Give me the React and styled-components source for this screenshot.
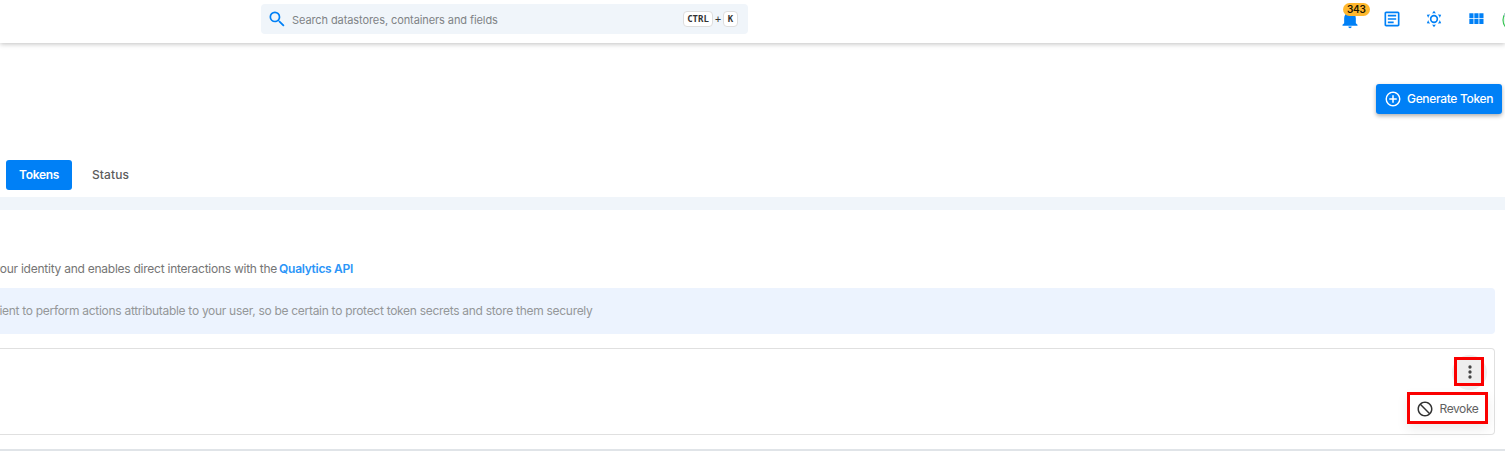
import React from "react";
import styled, { createGlobalStyle } from "styled-components";

const Global = createGlobalStyle`
  * { box-sizing: border-box; }
  body { margin: 0; background: #fff; font-family: Inter, "Liberation Sans", sans-serif; font-size: 12px; overflow: hidden; }
`;

const paths = {
  search: "M9.5,3A6.5,6.5 0 0,1 16,9.5C16,11.11 15.41,12.59 14.44,13.73L14.71,14H15.5L21,19.5L19.5,21L14,15.5V14.71L13.73,14.44C12.59,15.41 11.11,16 9.5,16A6.5,6.5 0 0,1 3,9.5A6.5,6.5 0 0,1 9.5,3M9.5,5C7,5 5,7 5,9.5C5,12 7,14 9.5,14C12,14 14,12 14,9.5C14,7 12,5 9.5,5Z",
  bell: "M21,19V20H3V19L5,17V11C5,7.9 7.03,5.17 10,4.29C10,4.19 10,4.1 10,4A2,2 0 0,1 12,2A2,2 0 0,1 14,4C14,4.1 14,4.19 14,4.29C16.97,5.17 19,7.9 19,11V17L21,19M14,21A2,2 0 0,1 12,23A2,2 0 0,1 10,21",
  notes: "M5,3C3.89,3 3,3.89 3,5V19C3,20.11 3.89,21 5,21H19C20.11,21 21,20.11 21,19V5C21,3.89 20.11,3 19,3H5M5,5H19V19H5V5M7,7V9H17V7H7M7,11V13H17V11H7M7,15V17H14V15H7Z",
  sun: "M12,7A5,5 0 0,1 17,12A5,5 0 0,1 12,17A5,5 0 0,1 7,12A5,5 0 0,1 12,7M12,9A3,3 0 0,0 9,12A3,3 0 0,0 12,15A3,3 0 0,0 15,12A3,3 0 0,0 12,9M12,2L14.39,5.42C13.65,5.15 12.84,5 12,5C11.16,5 10.35,5.15 9.61,5.42L12,2M3.34,7L7.5,6.65C6.9,7.16 6.36,7.78 5.94,8.5C5.5,9.24 5.25,10 5.11,10.79L3.34,7M3.36,17L5.12,13.23C5.26,14 5.53,14.78 5.95,15.5C6.37,16.24 6.91,16.86 7.5,17.37L3.36,17M20.65,7L18.88,10.79C18.74,10 18.47,9.23 18.05,8.5C17.63,7.78 17.1,7.15 16.5,6.64L20.65,7M20.64,17L16.5,17.36C17.09,16.85 17.62,16.22 18.04,15.5C18.46,14.77 18.73,14 18.87,13.21L20.64,17M12,22L9.59,18.56C10.33,18.83 11.14,19 12,19C12.82,19 13.63,18.83 14.37,18.56L12,22Z",
  grid: "M16,5V11H21V5M10,11H15V5H10M16,18H21V12H16M10,18H15V12H10M4,18H9V12H4M4,11H9V5H4V11Z",
  plus: "M12,20C7.59,20 4,16.41 4,12C4,7.59 7.59,4 12,4C16.41,4 20,7.59 20,12C20,16.41 16.41,20 12,20M12,2A10,10 0 0,0 2,12A10,10 0 0,0 12,22A10,10 0 0,0 22,12A10,10 0 0,0 12,2M13,7H11V11H7V13H11V17H13V13H17V11H13V7Z",
  dots: "M12,16A2,2 0 0,1 14,18A2,2 0 0,1 12,20A2,2 0 0,1 10,18A2,2 0 0,1 12,16M12,10A2,2 0 0,1 14,12A2,2 0 0,1 12,14A2,2 0 0,1 10,12A2,2 0 0,1 12,10M12,4A2,2 0 0,1 14,6A2,2 0 0,1 12,8A2,2 0 0,1 10,6A2,2 0 0,1 12,4Z",
  cancel: "M12 2C17.5 2 22 6.5 22 12S17.5 22 12 22 2 17.5 2 12 6.5 2 12 2M12 4C10.1 4 8.4 4.6 7.1 5.7L18.3 16.9C19.3 15.5 20 13.8 20 12C20 7.6 16.4 4 12 4M16.9 18.3L5.7 7.1C4.6 8.4 4 10.1 4 12C4 16.4 7.6 20 12 20C13.9 20 15.6 19.4 16.9 18.3Z",
};

const Svg = styled.svg`
  display: block;
  flex: none;
  fill: currentColor;
`;
const Icon = ({ name, size = 20 }) => (
  <Svg width={size} height={size} viewBox="0 0 24 24"><path d={paths[name]} /></Svg>
);

const Page = styled.div`
  position: relative;
  height: 451px;
  overflow: hidden;
  display: flex;
  flex-direction: column;
`;
const Label = styled.span`
  white-space: nowrap;
  letter-spacing: ${(p) => p.$track || 0}px;
`;

const TopBar = styled.header`
  position: relative;
  flex: none;
  height: 43px;
  padding: 4px 0 0 261px;
  display: flex;
  align-items: flex-start;
  box-shadow: 0 1px 5px rgba(0, 0, 0, 0.25);
`;
const SearchBox = styled.div`
  width: 487px;
  height: 30px;
  padding: 0 10px 0 6px;
  border-radius: 4px;
  background: #f0f5fa;
  color: #0080f6;
  display: flex;
  align-items: center;
`;
const SearchIcon = styled.div`
  margin-top: -1px;
`;
const Placeholder = styled(Label)`
  flex: 1;
  margin: 2px 0 0 5px;
  font-size: 11px;
  color: #7f8386;
`;
const Keys = styled.div`
  display: flex;
  align-items: center;
  gap: 2px;
  color: #333;
  font: 10px "DejaVu Sans Mono", monospace;
`;
const Key = styled.kbd`
  height: 16px;
  width: ${(p) => p.$w}px;
  border: 1px solid #dedede;
  border-radius: 4px;
  background: #fff;
  font: 700 9px/14px "DejaVu Sans Mono", monospace;
  text-align: center;
`;
const Actions = styled.div`
  margin-left: auto;
  margin-right: 19px;
  padding-top: 4.5px;
  display: flex;
  gap: 21.9px;
  color: #0080f6;
`;
const BellWrap = styled.div`
  position: relative;
`;
const Badge = styled.span`
  position: absolute;
  left: 2.5px;
  top: -5.5px;
  width: 27px;
  height: 13px;
  border-radius: 7px;
  background: #ffb82e;
  color: #1c1500;
  font-size: 10px;
  font-weight: 600;
  line-height: 13px;
  letter-spacing: -0.2px;
  text-align: center;
`;
const Avatar = styled.svg`
  position: absolute;
  left: 1501.5px;
  top: 8px;
`;

const Heading = styled.section`
  flex: none;
  height: 117px;
  padding: 41px 3px 0 0;
  display: flex;
  justify-content: flex-end;
`;
const PrimaryButton = styled.button`
  width: 126px;
  height: 30px;
  border: 0;
  border-radius: 3px;
  padding: 0 0 1px 8px;
  display: flex;
  align-items: center;
  gap: 5px;
  background: #0080f6;
  color: #fff;
  font: 500 12px Inter, sans-serif;
  box-shadow: 0 2px 4px rgba(0, 0, 0, 0.32);
`;
const Tabs = styled.nav`
  flex: none;
  height: 37px;
  padding-left: 6px;
  display: flex;
`;
const Tab = styled.div`
  width: ${(p) => (p.$active ? 66 : 77)}px;
  height: 30px;
  padding-bottom: 1px;
  border-radius: 3px;
  display: flex;
  align-items: center;
  justify-content: center;
  background: ${(p) => (p.$active ? "#0080f6" : "transparent")};
  color: ${(p) => (p.$active ? "#fff" : "#5c5c5c")};
  font-weight: ${(p) => (p.$active ? 600 : 500)};
`;
const Divider = styled.div`
  flex: none;
  height: 13px;
  background: #f0f5fa;
`;
const Panel = styled.main`
  flex: none;
  height: 241px;
  padding: 51px 10px 0 0;
  border-bottom: 2px solid #e0e4e8;
  display: flex;
  flex-direction: column;
`;
const Intro = styled.div`
  width: 353px;
  height: 27px;
  line-height: 16px;
  display: flex;
  justify-content: flex-end;
  gap: 2px;
  color: #757575;
`;
const Link = styled(Label)`
  color: #2b95f8;
  font-weight: 600;
`;
const Notice = styled.div`
  height: 46px;
  padding-bottom: 1px;
  border-radius: 0 4px 4px 0;
  background: #ecf3fe;
  color: #949799;
  display: flex;
  align-items: center;
`;
const NoticeText = styled.div`
  width: 592.5px;
  display: flex;
  justify-content: flex-end;
`;
const TokenRow = styled.div`
  height: 87px;
  margin-top: 14px;
  padding: 8px 6px 0 0;
  border: 1px solid #e0e0e0;
  border-left: 0;
  border-radius: 0 4px 4px 0;
  display: flex;
  flex-direction: column;
  align-items: flex-end;
`;
const MenuButton = styled.div`
  position: relative;
  z-index: 0;
  width: 30px;
  height: 30px;
  margin-right: 4px;
  display: flex;
  align-items: center;
  justify-content: center;
  padding-left: 1px;
  color: #444;
  &::before {
    content: "";
    position: absolute;
    z-index: -1;
    inset: -2px -3px -3px -2px;
    border-radius: 50%;
    background: #eee;
  }
  &::after {
    content: "";
    position: absolute;
    inset: 0 0 1px;
    border: 3px solid #fa0000;
  }
`;
const MenuItem = styled.div`
  position: relative;
  width: 81px;
  height: 32px;
  margin-top: 5px;
  border: 3px solid #fa0000;
  padding: 1px 0 0 6px;
  display: flex;
  align-items: center;
  gap: 5.5px;
  background: #fff;
  color: #333;
  box-shadow: 0 5px 12px rgba(0, 0, 0, 0.08);
`;
const MenuText = styled(Label)`
  color: #616161;
`;

export default function App() {
  return (
    <>
      <Global />
      <Page>
        <TopBar>
          <SearchBox>
            <SearchIcon><Icon name="search" /></SearchIcon>
            <Placeholder $track={-0.09}>Search datastores, containers and fields</Placeholder>
            <Keys><Key $w={30}>CTRL</Key>+<Key $w={15}>K</Key></Keys>
          </SearchBox>
          <Actions>
            <BellWrap><Icon name="bell" /><Badge>343</Badge></BellWrap>
            <Icon name="notes" />
            <Icon name="sun" />
            <Icon name="grid" />
          </Actions>
          <Avatar width="24" height="24" viewBox="0 0 24 24">
            <circle cx="12" cy="12" r="11" fill="#e9f7ec" stroke="#35c553" strokeWidth="1.2" />
            <path d="M2 6 5 3V7L2 9Z" fill="#a9c6cc" />
          </Avatar>
        </TopBar>
        <Heading>
          <PrimaryButton><Icon name="plus" size={18} /><Label $track={-0.33}>Generate Token</Label></PrimaryButton>
        </Heading>
        <Tabs>
          <Tab $active><Label $track={-0.35}>Tokens</Label></Tab>
          <Tab><Label $track={0.08}>Status</Label></Tab>
        </Tabs>
        <Divider />
        <Panel>
          <Intro>
            <Label $track={-0.25}>your identity and enables direct interactions with the</Label>
            <Link $track={-0.3}>Qualytics API</Link>
          </Intro>
          <Notice>
            <NoticeText>
              <Label $track={-0.29}>client to perform actions attributable to your user, so be certain to protect token secrets and store them securely</Label>
            </NoticeText>
          </Notice>
          <TokenRow>
            <MenuButton><Icon name="dots" size={20} /></MenuButton>
            <MenuItem><Icon name="cancel" size={18} /><MenuText $track={-0.4}>Revoke</MenuText></MenuItem>
          </TokenRow>
        </Panel>
      </Page>
    </>
  );
}
